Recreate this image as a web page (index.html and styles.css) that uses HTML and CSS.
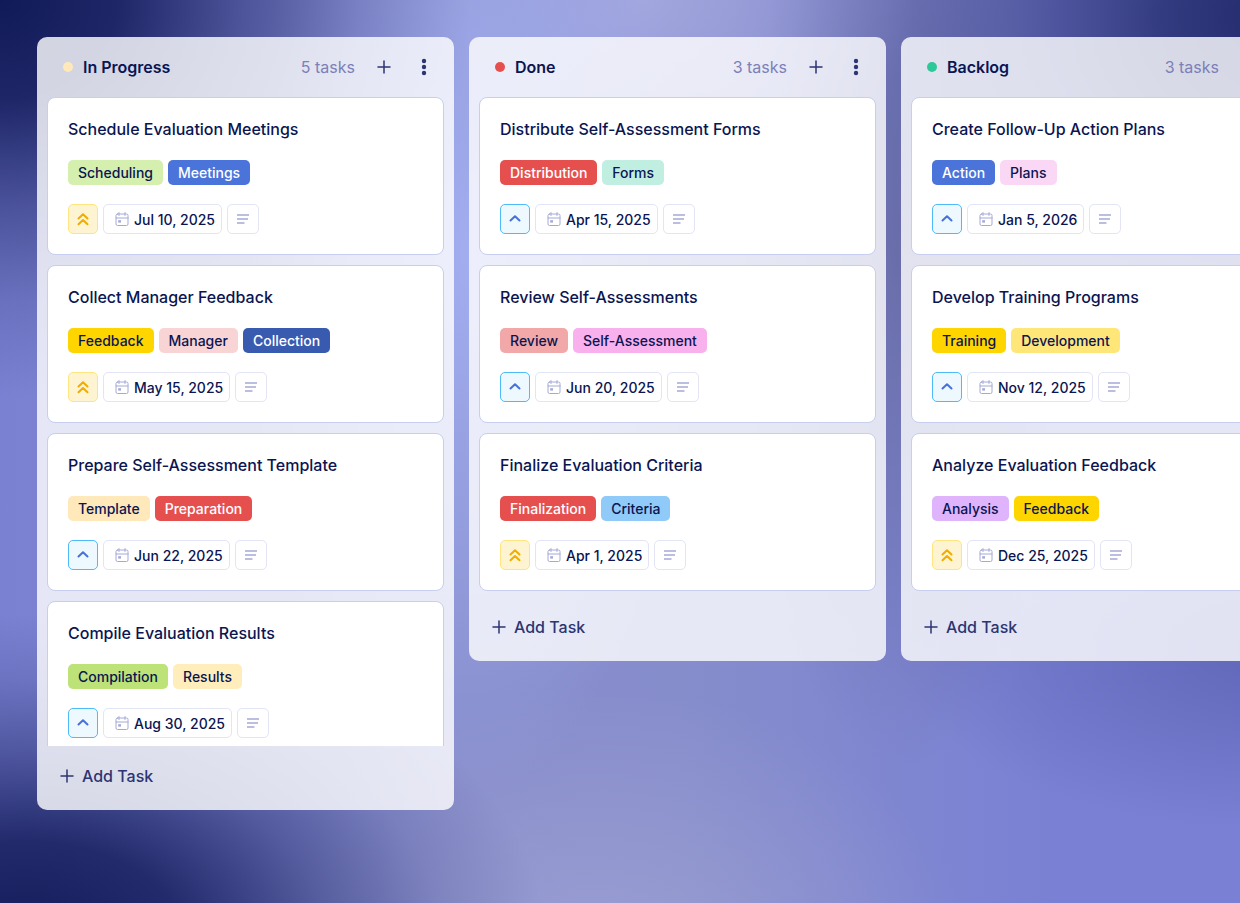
FILE: index.html
```html
<!DOCTYPE html>
<html lang="en">
<head>
  <meta charset="UTF-8">
  <meta name="viewport" content="width=device-width, initial-scale=1.0">
  <title>Task Board</title>
  <link rel="stylesheet" href="styles.css">
</head>
<body>
  <!-- Icons -->
  <svg class="icon-defs" aria-hidden="true">
    <symbol id="plus" viewBox="0 0 14 14"><path d="M7 1v12M1 7h12" /></symbol>
    <symbol id="more" viewBox="0 0 6 18"><circle cx="3" cy="3" r="2.2" /><circle cx="3" cy="9" r="2.2" /><circle cx="3" cy="15" r="2.2" /></symbol>
    <symbol id="high" viewBox="0 0 14 14"><path d="M2.5 6.500 7 2.200l4.500 4.300M2.500 12.300 7 8l4.500 4.300" /></symbol>
    <symbol id="medium" viewBox="0 0 14 14"><path d="M2.500 8.500 7 4.200l4.500 4.300" /></symbol>
    <symbol id="calendar" viewBox="0 0 14 15"><rect x="1" y="2" width="12" height="11.500" rx="1.500" /><path d="M1 6h12M4 .5v3M10 .5v3" /><rect class="day" x="3.200" y="8.200" width="2.800" height="2.400" /></symbol>
    <symbol id="lines" viewBox="0 0 12 10"><path d="M0 1h12M0 5h11M0 9h7.500" /></symbol>
  </svg>

  <main class="board" id="board"></main>

  <script src="script.js"></script>
</body>
</html>
```

FILE: styles.css
```css
* {
  box-sizing: border-box;
}

body {
  margin: 0;
  min-height: 100vh;
  font-family: Inter, "Liberation Sans", sans-serif;
  color: #0a1551;
  background:
    radial-gradient(ellipse 38% 44% at 0% 0%, #111a58 0%, rgba(20, 28, 92, 0.9) 25%, rgba(28, 36, 102, 0.5) 52%, rgba(40, 48, 114, 0.2) 76%, transparent 100%),
    radial-gradient(ellipse 42% 36% at 2% 104%, #131b5a 0%, rgba(22, 30, 94, 0.88) 30%, rgba(34, 42, 108, 0.48) 58%, rgba(44, 52, 118, 0.18) 80%, transparent 100%),
    radial-gradient(ellipse 42% 46% at 104% 2%, #1f2868 0%, rgba(34, 42, 108, 0.8) 25%, rgba(50, 56, 118, 0.42) 55%, rgba(60, 66, 126, 0.16) 78%, transparent 100%),
    radial-gradient(ellipse 18% 60% at 38% 28%, #a2aef0 0%, transparent 100%),
    radial-gradient(ellipse 22% 22% at 52% 0%, #a2a6de 0%, transparent 100%),
    radial-gradient(ellipse 14% 55% at 73% 30%, #6a6eaa 0%, transparent 100%),
    radial-gradient(ellipse 32% 20% at 104% 72%, #5f66b8 0%, transparent 100%),
    radial-gradient(ellipse 30% 30% at 48% 106%, #9a9ed2 0%, transparent 100%),
    linear-gradient(90deg, #7a81d2 0%, #868ccb 36%, #868dcb 55%, #7a81d4 85%);
}

button {
  display: flex;
  align-items: center;
  justify-content: center;
  padding: 0;
  font: inherit;
  color: inherit;
  background: none;
  border: none;
  cursor: pointer;
}

svg {
  fill: none;
  stroke: currentColor;
  stroke-linecap: round;
  stroke-linejoin: round;
}

.icon-defs {
  position: absolute;
  width: 0;
  height: 0;
}

.board {
  display: flex;
  align-items: flex-start;
  gap: 15px;
  min-height: 100vh;
  padding: 37px;
  overflow-x: auto;
  scrollbar-width: none;
}

/* Columns */
.column {
  flex: 0 0 417px;
  background-color: rgba(252, 252, 254, 0.82);
  border-radius: 10px;
}

.column-header {
  display: flex;
  align-items: center;
  height: 60px;
  padding: 0 15px 0 26px;
}

.dot {
  width: 10px;
  height: 10px;
  margin-right: 10px;
  border-radius: 50%;
}

.column-title {
  flex: 1;
  margin: 0;
  font-size: 16px;
  font-weight: 600;
}

.count {
  margin-right: 14px;
  font-size: 16px;
  color: #7b80b8;
}

.icon-button {
  width: 30px;
  height: 30px;
  color: #2c3573;
}

.icon-button + .icon-button {
  margin-left: 10px;
}

.icon-plus {
  width: 14px;
  height: 14px;
  stroke-width: 1.5;
}

.icon-more {
  width: 6px;
  height: 18px;
  fill: currentColor;
  stroke: none;
}

.card-list {
  display: flex;
  flex-direction: column;
  gap: 10px;
  max-height: calc(100vh - 254px);
  padding: 0 10px 6px;
  overflow-y: auto;
  scrollbar-width: none;
}

.column-footer {
  height: 64px;
  padding: 15px 20px;
}

.add-task {
  gap: 8px;
  height: 30px;
  padding: 0 3px;
  font-size: 16px;
  font-weight: 500;
  color: #2c3573;
}

/* Cards */
.card {
  flex-shrink: 0;
  display: flex;
  flex-direction: column;
  gap: 19px;
  padding: 19px 20px 20px;
  background-color: #fff;
  border: 1px solid #c8ceed;
  border-radius: 8px;
}

.card-title {
  margin: 0;
  font-size: 16px;
  font-weight: 500;
  line-height: 24px;
}

.tags,
.details {
  display: flex;
  gap: 5px;
}

.tag {
  padding: 0 10px;
  font-size: 14px;
  font-weight: 500;
  line-height: 25px;
  border-radius: 5px;
}

.details button {
  height: 30px;
  border: 1px solid #e3e5f5;
  border-radius: 5px;
}

.details .priority {
  width: 30px;
}

.priority svg {
  width: 14px;
  height: 14px;
  stroke-width: 2;
}

.details .high {
  color: #f0ad00;
  background-color: #fff4d1;
  border-color: #ffe580;
}

.details .medium {
  color: #4573d9;
  background-color: #edf8ff;
  border-color: #4dbbfa;
}

.details .date {
  gap: 5px;
  padding: 0 6px 0 11px;
  font-size: 14px;
  font-weight: 500;
}

.date svg {
  width: 14px;
  height: 15px;
  color: #a5a9d8;
}

.day {
  fill: currentColor;
  stroke: none;
}

.details .note {
  width: 32px;
  color: #a5a9d8;
}

.note svg {
  width: 12px;
  height: 10px;
  stroke-width: 1.5;
  stroke-linecap: butt;
}

/* Tag colors */
.lime { background-color: #d5efae; }
.green { background-color: #bce278; }
.mint { background-color: #c0eee1; }
.blue { background-color: #4a74d9; color: #fff; }
.navy { background-color: #385bb0; color: #fff; }
.sky { background-color: #8fcaf8; }
.red { background-color: #e5504f; color: #fff; }
.rose { background-color: #f2a8a8; }
.blush { background-color: #f9d4d5; }
.yellow { background-color: #ffd500; }
.butter { background-color: #ffe679; }
.cream { background-color: #ffeebb; }
.sand { background-color: #ffe8b9; }
.orchid { background-color: #f8b1ec; }
.pink { background-color: #fad8f5; }
.violet { background-color: #dfb4fc; }
.teal { background-color: #2dc897; }
```

FILE: script.js
```js
const columns = [
  {
    title: "In Progress", count: 5, color: "sand",
    tasks: [
      { title: "Schedule Evaluation Meetings", tags: [["Scheduling", "lime"], ["Meetings", "blue"]], priority: "high", date: "Jul 10, 2025" },
      { title: "Collect Manager Feedback", tags: [["Feedback", "yellow"], ["Manager", "blush"], ["Collection", "navy"]], priority: "high", date: "May 15, 2025" },
      { title: "Prepare Self-Assessment Template", tags: [["Template", "sand"], ["Preparation", "red"]], priority: "medium", date: "Jun 22, 2025" },
      { title: "Compile Evaluation Results", tags: [["Compilation", "green"], ["Results", "cream"]], priority: "medium", date: "Aug 30, 2025" }
    ]
  },
  {
    title: "Done", count: 3, color: "red",
    tasks: [
      { title: "Distribute Self-Assessment Forms", tags: [["Distribution", "red"], ["Forms", "mint"]], priority: "medium", date: "Apr 15, 2025" },
      { title: "Review Self-Assessments", tags: [["Review", "rose"], ["Self-Assessment", "orchid"]], priority: "medium", date: "Jun 20, 2025" },
      { title: "Finalize Evaluation Criteria", tags: [["Finalization", "red"], ["Criteria", "sky"]], priority: "high", date: "Apr 1, 2025" }
    ]
  },
  {
    title: "Backlog", count: 3, color: "teal",
    tasks: [
      { title: "Create Follow-Up Action Plans", tags: [["Action", "blue"], ["Plans", "pink"]], priority: "medium", date: "Jan 5, 2026" },
      { title: "Develop Training Programs", tags: [["Training", "yellow"], ["Development", "butter"]], priority: "medium", date: "Nov 12, 2025" },
      { title: "Analyze Evaluation Feedback", tags: [["Analysis", "violet"], ["Feedback", "yellow"]], priority: "high", date: "Dec 25, 2025" }
    ]
  }
];

function icon(name) {
  return `<svg class="icon-${name}" aria-hidden="true"><use href="#${name}" /></svg>`;
}

function renderCard(task) {
  const tags = task.tags.map(([text, color]) => `<span class="tag ${color}">${text}</span>`).join("");
  return `
    <article class="card">
      <h3 class="card-title">${task.title}</h3>
      <div class="tags">${tags}</div>
      <div class="details">
        <button type="button" class="priority ${task.priority}" aria-label="Priority: ${task.priority}">${icon(task.priority)}</button>
        <button type="button" class="date">${icon("calendar")}${task.date}</button>
        <button type="button" class="note" aria-label="Description">${icon("lines")}</button>
      </div>
    </article>`;
}

function renderColumn(column) {
  return `
    <section class="column">
      <header class="column-header">
        <span class="dot ${column.color}"></span>
        <h2 class="column-title">${column.title}</h2>
        <span class="count">${column.count} tasks</span>
        <button type="button" class="icon-button" aria-label="Add task">${icon("plus")}</button>
        <button type="button" class="icon-button" aria-label="More options">${icon("more")}</button>
      </header>
      <div class="card-list">${column.tasks.map(renderCard).join("")}</div>
      <footer class="column-footer">
        <button type="button" class="add-task">${icon("plus")}Add Task</button>
      </footer>
    </section>`;
}

document.getElementById("board").innerHTML = columns.map(renderColumn).join("");
```
